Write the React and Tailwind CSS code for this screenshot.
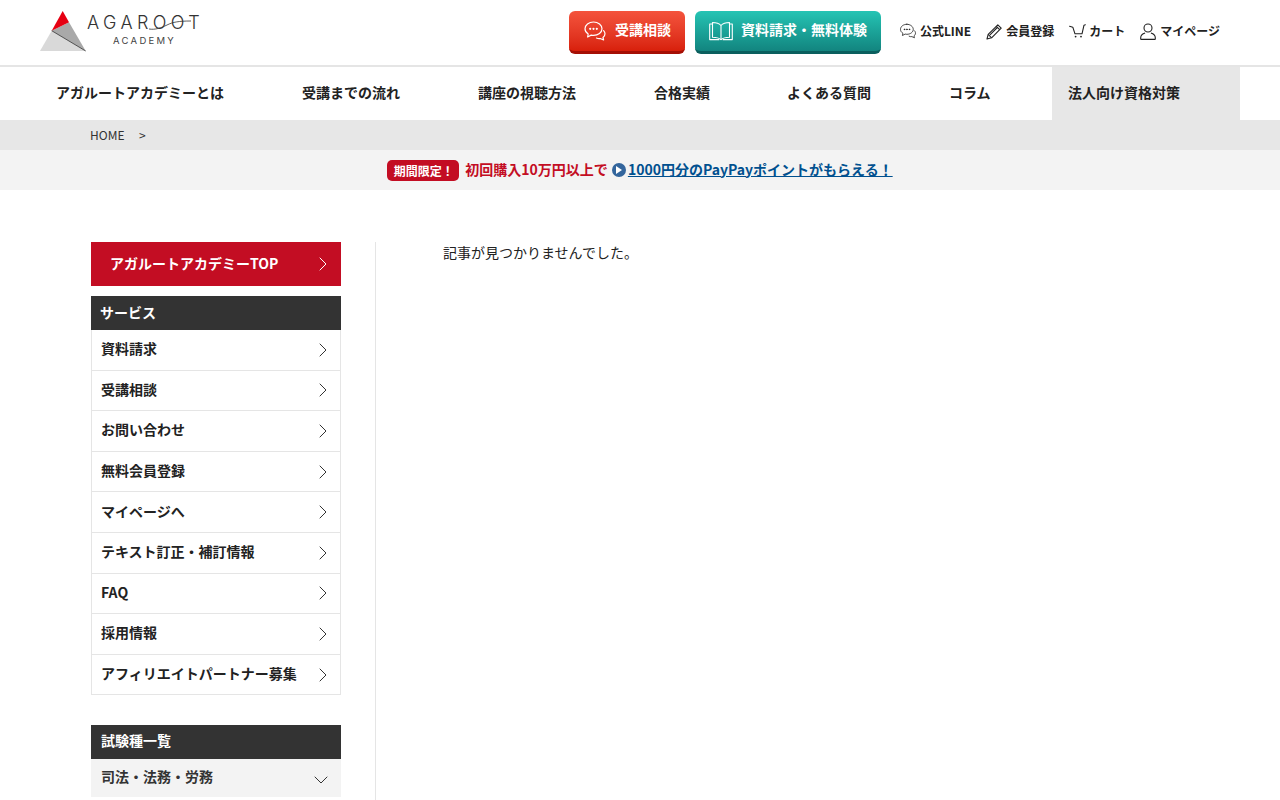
import { ChevronRight, ChevronDown } from 'lucide-react'

const NAV = [
  { label: 'アガルートアカデミーとは', w: 'w-[246px]' },
  { label: '受講までの流れ', w: 'w-[176px]' },
  { label: '講座の視聴方法', w: 'w-[176px]' },
  { label: '合格実績', w: 'w-[133px]' },
  { label: 'よくある質問', w: 'w-[162px]' },
  { label: 'コラム', w: 'w-[103px]' },
]

const SERVICES = [
  '資料請求',
  '受講相談',
  'お問い合わせ',
  '無料会員登録',
  'マイページへ',
  'テキスト訂正・補訂情報',
  'FAQ',
  '採用情報',
  'アフィリエイトパートナー募集',
]

function Logo() {
  return (
    <div className="relative w-[160px] h-[40px]">
      <svg width="46" height="41" viewBox="0 0 46 41" className="absolute left-0 top-0">
        <polygon points="0,40 11.7,19.7 45.7,40" fill="#d9d9d9" />
        <polygon points="11.7,19.7 29,11.3 45.7,40" fill="#a9a9a9" />
        <polygon points="11.7,19.7 22.7,0 29,11.3" fill="#e60012" />
        <line x1="11.7" y1="19.7" x2="45.7" y2="40" stroke="#333" strokeWidth="0.8" />
      </svg>
      <span className="absolute left-[47px] top-[0.5px] text-[18px] leading-[24px] font-light tracking-[0.245em] text-[#333] whitespace-nowrap font-['Inter',sans-serif]">
        AGAROOT
      </span>
      <svg width="50" height="12" viewBox="0 0 50 12" fill="none" className="absolute left-[109px] top-[8px]">
        <path d="M0 10c6 1 12-1 18-4s12-4 24-4" stroke="#333" strokeWidth="0.8" />
      </svg>
      <span className="absolute left-[73px] top-[24px] text-[9.5px] leading-[12px] tracking-[0.24em] text-[#444] whitespace-nowrap font-['Inter',sans-serif]">
        ACADEMY
      </span>
    </div>
  )
}

function ChatIcon({ size = 24, color = 'currentColor', sw = 1.2 }) {
  return (
    <svg width={size} height={size} viewBox="0 0 24 24" fill="none" stroke={color} strokeWidth={sw} strokeLinecap="round" strokeLinejoin="round">
      <path d="M10.5 3C5.8 3 2 6 2 9.8c0 2.2 1.2 4 3.2 5.2L4.6 18l3.6-1.9c.7.2 1.5.3 2.3.3 4.7 0 8.5-3 8.5-6.6S15.2 3 10.5 3z" />
      <path d="M20.6 11.6c1 1 1.4 2.1 1.4 3.2 0 1.5-.8 2.8-2 3.7l.6 2.5-3.4-1.5c-1.2.2-2.6 0-3.7-.5" />
      <circle cx="7.2" cy="9.8" r=".5" fill={color} />
      <circle cx="10.5" cy="9.8" r=".5" fill={color} />
      <circle cx="13.8" cy="9.8" r=".5" fill={color} />
    </svg>
  )
}

function BookIcon() {
  return (
    <svg width="24" height="20" viewBox="0 0 24 20" fill="none" stroke="white" strokeWidth="1.1" strokeLinejoin="round">
      <path d="M12 4.5C10 2.3 7 1.5 3.5 1.5v14.8c3.5 0 6.5.6 8.5 2.4 2-1.8 5-2.4 8.5-2.4V1.5C17 1.5 14 2.3 12 4.5z" />
      <path d="M12 4.5v14.2" />
      <path d="M3.5 3H.7v15.6h9.6M20.5 3h2.8v15.6h-9.6" />
    </svg>
  )
}

function PenIcon() {
  return (
    <svg width="17" height="17" viewBox="0 0 17 17" fill="none" stroke="#222" strokeWidth="1.1" strokeLinejoin="round">
      <path d="M1 16l1.2-4.6L11.8 1.8l3.4 3.4-9.6 9.6L1 16z" />
      <path d="M2.2 11.4l3.4 3.4M10.3 3.3l3.4 3.4M4 11.8l7.8-7.8" />
    </svg>
  )
}

function CartIcon() {
  return (
    <svg width="17" height="15" viewBox="0 0 17 15" fill="none" stroke="#222" strokeWidth="1.1" strokeLinecap="round" strokeLinejoin="round">
      <path d="M.6 2.2l3.2 1 2.2 6.6h7l2-8.6 1.4-.4" />
      <circle cx="6.6" cy="12.6" r=".9" fill="#222" stroke="none" />
      <circle cx="12" cy="12.6" r=".9" fill="#222" stroke="none" />
    </svg>
  )
}

function UserIcon() {
  return (
    <svg width="16" height="17" viewBox="0 0 16 17" fill="none" stroke="#222" strokeWidth="1.1" strokeLinejoin="round">
      <circle cx="8" cy="5" r="4" />
      <path d="M.7 16.4v-1.6c0-2.4 2.4-4.2 4.4-4.8M15.3 16.4v-1.6c0-2.4-2.4-4.2-4.4-4.8M.7 16.4h14.6" />
    </svg>
  )
}

export default function App() {
  return (
    <div className="bg-white h-[800px] overflow-hidden text-[#222] font-['Noto_Sans_CJK_JP','Noto_Sans',sans-serif]">
      {/* Header */}
      <header className="h-[67px] border-b-2 border-[#e5e5e5] flex items-center justify-between pl-[40px] pr-[60px]">
        <div className="-mt-[4px]"><Logo /></div>
        <div className="flex items-center -mt-[1px]">
          <a className="w-[116px] h-[43px] rounded-[6px] flex items-center justify-center gap-[8px] text-white text-[14px] font-bold bg-gradient-to-b from-[#f4533c] to-[#d81f0a] border-b-[3px] border-[#a50f05]">
            <ChatIcon color="white" />
            <span className="-mt-[2px]">受講相談</span>
          </a>
          <a className="ml-[10px] w-[186px] h-[43px] rounded-[6px] flex items-center justify-center gap-[8px] text-white text-[14px] font-bold bg-gradient-to-b from-[#25c4b4] to-[#12857f] border-b-[3px] border-[#0b5f5e]">
            <BookIcon />
            <span className="-mt-[2px]">資料請求・無料体験</span>
          </a>
          <div className="ml-[18px] -mt-[2px] flex items-center gap-[15px] text-[12px] font-bold">
            <span className="flex items-center gap-[3px]"><ChatIcon size={18} color="#222" sw={1.1} />公式LINE</span>
            <span className="flex items-center gap-[3px]"><PenIcon />会員登録</span>
            <span className="flex items-center gap-[3px]"><CartIcon />カート</span>
            <span className="flex items-center gap-[4px]"><UserIcon />マイページ</span>
          </div>
        </div>
      </header>

      {/* Global nav */}
      <nav className="h-[53px] flex pl-[56px] text-[14px] font-bold">
        {NAV.map(n => (
          <a key={n.label} className={`${n.w} flex items-center whitespace-nowrap pb-[3px]`}>{n.label}</a>
        ))}
        <a className="w-[188px] bg-[#e7e7e7] flex items-center pl-[16px] pb-[2px]">法人向け資格対策</a>
      </nav>

      {/* Breadcrumb */}
      <div className="h-[30px] bg-[#e7e7e7] flex items-center pl-[90px] text-[12px] text-[#333]">
        <span>HOME</span>
        <span className="ml-[14.5px]">&gt;</span>
      </div>

      {/* Campaign banner */}
      <div className="h-[40px] bg-[#f3f3f3] flex items-center justify-center text-[14px] font-bold">
        <span className="mt-[1px] h-[21px] w-[72px] pl-[1px] rounded-[5px] bg-[#c30d23] text-white text-[12px] flex items-center justify-center">期間限定！</span>
        <span className="ml-[6px] -mt-[2px] text-[#c30d23]">初回購入10万円以上で</span>
        <span className="ml-[4px] w-[14px] h-[14px] rounded-full bg-[#33659c] flex items-center justify-center">
          <span className="ml-[1px] border-y-[4px] border-y-transparent border-l-[6px] border-l-white" />
        </span>
        <a className="ml-[2px] -mt-[2px] text-[#00508f] underline">1000円分のPayPayポイントがもらえる！</a>
      </div>

      {/* Main */}
      <main className="flex pl-[91px] mt-[52px]">
        <aside className="w-[285px] pr-[34px] border-r border-[#e5e5e5] h-[600px] shrink-0">
          <a className="h-[44px] bg-[#c30d23] text-white text-[14px] font-bold flex items-center justify-between pl-[19px] pr-[6px]">
            <span className="-mt-[2px]">アガルートアカデミーTOP</span>
            <ChevronRight size={24} strokeWidth={1} />
          </a>

          <h2 className="mt-[10px] h-[34px] bg-[#333] text-white text-[14px] font-bold flex items-center pl-[9px] pb-[2px]">サービス</h2>
          <ul className="border-x border-[#e5e5e5]">
            {SERVICES.map(s => (
              <li key={s} className="h-[40.6px] flex items-center justify-between pl-[9px] pr-[5px] text-[14px] font-bold border-b border-[#e5e5e5]">
                <span className="-mt-[2px]">{s}</span>
                <ChevronRight size={24} strokeWidth={1} className="text-[#333]" />
              </li>
            ))}
          </ul>

          <h2 className="mt-[29.6px] h-[34px] bg-[#333] text-white text-[14px] font-bold flex items-center pl-[10px] pb-[3px]">試験種一覧</h2>
          <div className="h-[38px] bg-[#f3f3f3] flex items-center justify-between pl-[10px] pr-[8px] text-[14px] font-bold text-[#333]">
            <span className="-mt-[3px]">司法・法務・労務</span>
            <ChevronDown size={24} strokeWidth={1} className="mt-[4px]" />
          </div>
        </aside>

        <section className="pl-[67px] -mt-[2px] text-[14px] leading-[24px] text-[#222]">
          記事が見つかりませんでした。
        </section>
      </main>
    </div>
  )
}
